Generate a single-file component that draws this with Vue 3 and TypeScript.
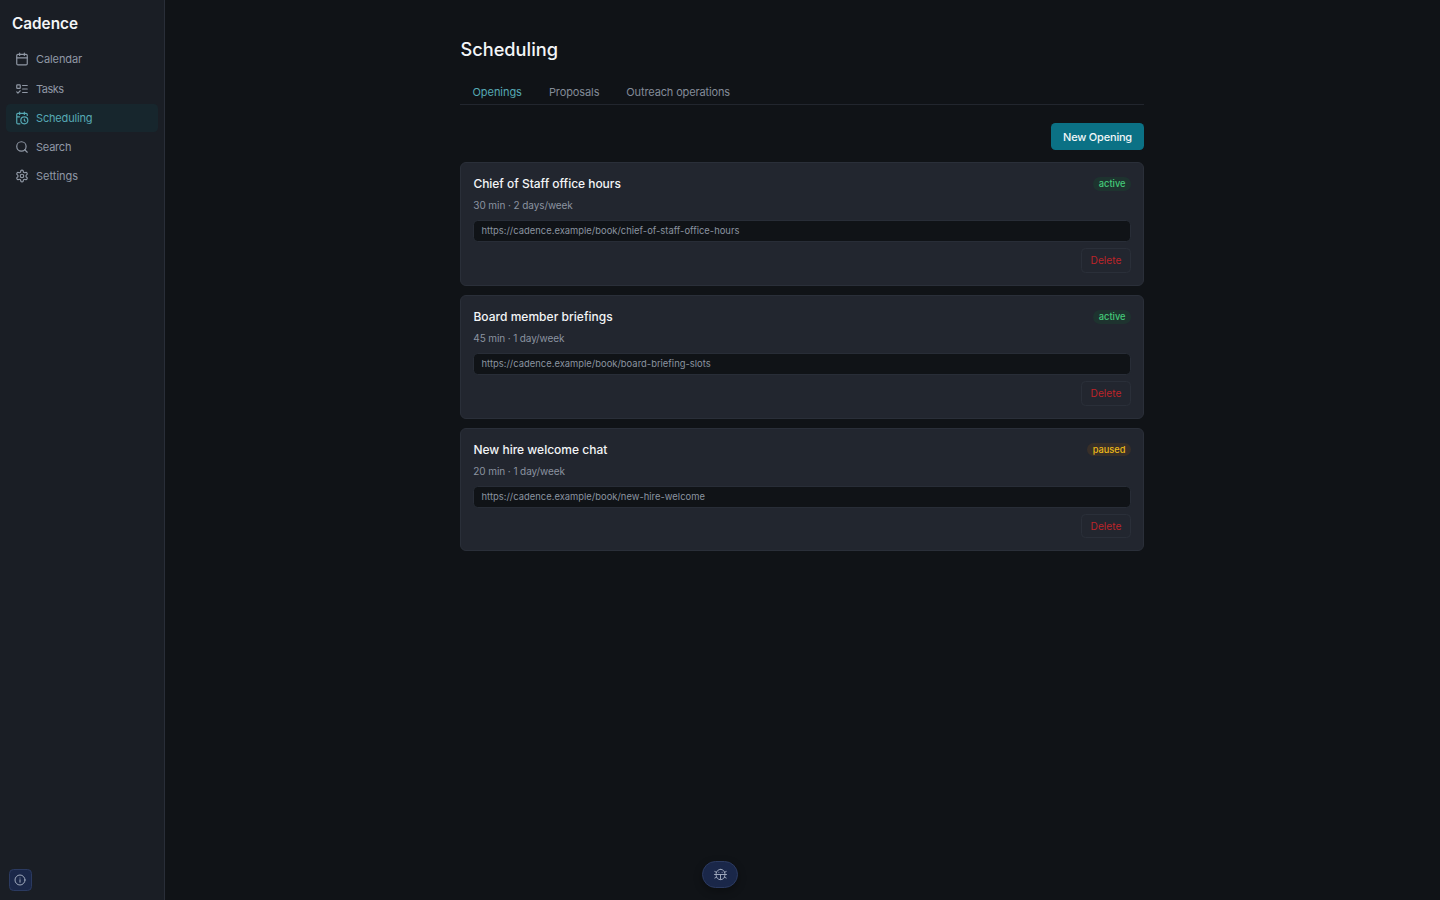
<script setup lang="ts">
interface NavItem {
  label: string
  icon: string
  active?: boolean
}
interface Opening {
  id: string
  title: string
  meta: string
  url: string
  status: 'active' | 'paused'
}

const nav: NavItem[] = [
  { label: 'Calendar', icon: 'calendar' },
  { label: 'Tasks', icon: 'tasks' },
  { label: 'Scheduling', icon: 'schedule', active: true },
  { label: 'Search', icon: 'search' },
  { label: 'Settings', icon: 'settings' },
]
const tabs = ['Openings', 'Proposals', 'Outreach operations']
const openings: Opening[] = [
  { id: 'office', title: 'Chief of Staff office hours', meta: '30 min · 2 days/week', url: 'https://cadence.example/book/chief-of-staff-office-hours', status: 'active' },
  { id: 'board', title: 'Board member briefings', meta: '45 min · 1 day/week', url: 'https://cadence.example/book/board-briefing-slots', status: 'active' },
  { id: 'welcome', title: 'New hire welcome chat', meta: '20 min · 1 day/week', url: 'https://cadence.example/book/new-hire-welcome', status: 'paused' },
]
</script>

<template>
  <div class="app">
    <aside class="sidebar">
      <div class="brand">Cadence</div>
      <nav class="nav">
        <a v-for="n in nav" :key="n.label" class="nav-item" :class="[n.icon, { on: n.active }]">
          <svg viewBox="0 0 24 24" class="ico">
            <template v-if="n.icon === 'calendar'">
              <rect x="3" y="4" width="18" height="18" rx="2" /><path d="M8 2v4M16 2v4M3 10h18" />
            </template>
            <template v-else-if="n.icon === 'tasks'">
              <rect x="3" y="5" width="6" height="6" rx="1" /><path d="m3 17 2 2 4-4M13 6h8M13 12h8M13 18h8" />
            </template>
            <template v-else-if="n.icon === 'schedule'">
              <path d="M21 7.5V6a2 2 0 0 0-2-2H5a2 2 0 0 0-2 2v14a2 2 0 0 0 2 2h3.5M16 2v4M8 2v4M3 10h5M17.5 17.5 16 16.3V14" /><circle cx="16" cy="16" r="6" />
            </template>
            <template v-else-if="n.icon === 'search'">
              <circle cx="11" cy="11" r="8" /><path d="m21 21-4.3-4.3" />
            </template>
            <template v-else>
              <path d="M12.22 2h-.44a2 2 0 0 0-2 2v.18a2 2 0 0 1-1 1.73l-.43.25a2 2 0 0 1-2 0l-.15-.08a2 2 0 0 0-2.73.73l-.22.38a2 2 0 0 0 .73 2.73l.15.1a2 2 0 0 1 1 1.72v.51a2 2 0 0 1-1 1.74l-.15.09a2 2 0 0 0-.73 2.73l.22.38a2 2 0 0 0 2.73.73l.15-.08a2 2 0 0 1 2 0l.43.25a2 2 0 0 1 1 1.73V20a2 2 0 0 0 2 2h.44a2 2 0 0 0 2-2v-.18a2 2 0 0 1 1-1.73l.43-.25a2 2 0 0 1 2 0l.15.08a2 2 0 0 0 2.73-.73l.22-.39a2 2 0 0 0-.73-2.73l-.15-.08a2 2 0 0 1-1-1.74v-.5a2 2 0 0 1 1-1.74l.15-.09a2 2 0 0 0 .73-2.73l-.22-.38a2 2 0 0 0-2.73-.73l-.15.08a2 2 0 0 1-2 0l-.43-.25a2 2 0 0 1-1-1.73V4a2 2 0 0 0-2-2z" /><circle cx="12" cy="12" r="3" />
            </template>
          </svg>
          <span>{{ n.label }}</span>
        </a>
      </nav>
      <button class="info" aria-label="Info">
        <svg viewBox="0 0 24 24"><circle cx="12" cy="12" r="10" /><path d="M12 16.5V11.5M12 8h.01" /></svg>
      </button>
    </aside>
    <main class="main">
      <div class="content">
        <h1>Scheduling</h1>
        <div class="tabs">
          <a v-for="(t, i) in tabs" :key="t" class="tab" :class="['tab-' + i, { on: i === 0 }]">{{ t }}</a>
        </div>
        <div class="actions"><button class="primary">New Opening</button></div>
        <section class="list">
          <article v-for="o in openings" :key="o.id" class="card" :class="o.id">
            <header class="head">
              <h2>{{ o.title }}</h2>
              <span class="badge" :class="o.status">{{ o.status }}</span>
            </header>
            <p class="meta">{{ o.meta }}</p>
            <div class="url">{{ o.url }}</div>
            <footer class="foot"><button class="delete">Delete</button></footer>
          </article>
        </section>
      </div>
    </main>
    <button class="bug" aria-label="Report a bug">
      <svg viewBox="0 0 24 24">
        <rect x="4" y="2.5" width="16" height="19" rx="8" />
        <path d="M1 12h22M12 12v9M4.5 8 1.5 6.5M19.500 8l3-1.500M4.500 17l-3 1.500M19.500 17l3 1.500M9 8h.01M15 8h.01" />
      </svg>
    </button>
  </div>
</template>

<style>
body { background: #101317; }
</style>

<style scoped>
.app { display: flex; height: 900px; position: relative; background: #101317; color: #f3f5f7; font-family: Inter, sans-serif; font-size: 11px; overflow: hidden; }
.sidebar { box-sizing: border-box; width: 165px; padding: 13px 6px 9px; background: #1a1e25; border-right: 1px solid #292e38; display: flex; flex-direction: column; }
.brand { font-size: 15.3px; font-weight: 600; line-height: 22px; padding-left: 6px; margin-bottom: 10.5px; }
.nav { display: flex; flex-direction: column; gap: 1.75px; flex: 1; }
.nav-item { display: flex; align-items: center; gap: 7px; height: 27.5px; padding-left: 9px; border-radius: 4.5px; color: #9098a5; }
.nav-item.on { background: #17262d; color: #56a9b4; }
.calendar { letter-spacing: -0.09px; }
.tasks { letter-spacing: -0.5px; }
.schedule { letter-spacing: -0.17px; }
.search { letter-spacing: -0.22px; }
.ico { width: 14px; height: 14px; }
svg { fill: none; stroke: currentColor; stroke-width: 2; stroke-linecap: round; stroke-linejoin: round; display: block; }
button { font-family: inherit; box-sizing: border-box; margin: 0; padding: 0; display: flex; align-items: center; justify-content: center; }
.main { flex: 1; display: flex; justify-content: center; }
.content { width: 684px; padding-top: 36px; margin-right: 1px; }
h1, h2, p { margin: 0; font-weight: 500; }
h1 { font-size: 18.2px; line-height: 26px; padding-left: 0.5px; }
.tabs { display: flex; gap: 3px; margin-top: 17px; height: 25px; padding-left: 0.5px; border-bottom: 1px solid #22262e; }
.tab { padding: 0 12px; line-height: 26px; color: #838b98; }
.tab.on { color: #56a9b4; }
.tab-0 { letter-spacing: -0.05px; }
.tab-1 { letter-spacing: -0.1px; }
.tab-2 { letter-spacing: -0.14px; }
.actions { display: flex; justify-content: flex-end; margin: 18px 0 12px; }
.primary { width: 93px; height: 27px; border: 0; border-radius: 4.5px; background: #0b7185; color: #f1f7f8; font-size: 11px; font-weight: 500; letter-spacing: -0.2px; padding-top: 1px; }
.list { display: grid; gap: 9px; }
.card { box-sizing: border-box; height: 123.75px; padding: 12px; border: 1px solid #2a2f39; border-radius: 6px; background: #22262f; }
.head { display: flex; justify-content: space-between; height: 18px; }
h2 { font-size: 12px; line-height: 18px; padding-left: 0.4px; }
.meta { margin-top: 4px; margin-bottom: 7.25px; padding-left: 0.3px; font-size: 10px; font-weight: 400; line-height: 16px; color: #8b93a0; letter-spacing: -0.08px; }
.board .meta { letter-spacing: -0.12px; }
.office h2 { letter-spacing: -0.03px; }
.board h2 { letter-spacing: 0.03px; }
.url { box-sizing: border-box; height: 21.75px; line-height: 20px; padding: 0 7.5px; border: 1px solid #282d37; border-radius: 4.5px; background: #101317; color: #8b93a0; font-size: 9.4px; letter-spacing: 0.02px; }
.badge { align-self: center; height: 13.5px; line-height: 13.5px; padding: 0 5.5px 0 6px; border-radius: 7px; font-size: 9.25px; font-weight: 500; }
.badge.active { background: #1e332f; color: #45cb7a; }
.badge.paused { background: #382f29; color: #edba18; }
.foot { display: flex; justify-content: flex-end; margin-top: 6px; }
.delete { width: 50px; height: 24.75px; border: 1px solid #2a2f39; border-radius: 4.5px; background: transparent; color: #bd2429; font-size: 10.2px; }
.info { width: 22.5px; height: 22.5px; margin-left: 3px; border: 1px solid #2b3a60; border-radius: 4.5px; background: #1a2749; color: #a0aabd; }
.bug { position: absolute; left: 702px; bottom: 12px; width: 36px; height: 27px; border: 1px solid #2b3a60; border-radius: 14px; background: #1a2749; color: #a0aabd; box-shadow: 0 3px 9px rgba(0, 0, 0, 0.3); }
.info svg { width: 12px; height: 12px; }
.bug svg { width: 13px; height: 13px; stroke-width: 1.8; }
</style>
